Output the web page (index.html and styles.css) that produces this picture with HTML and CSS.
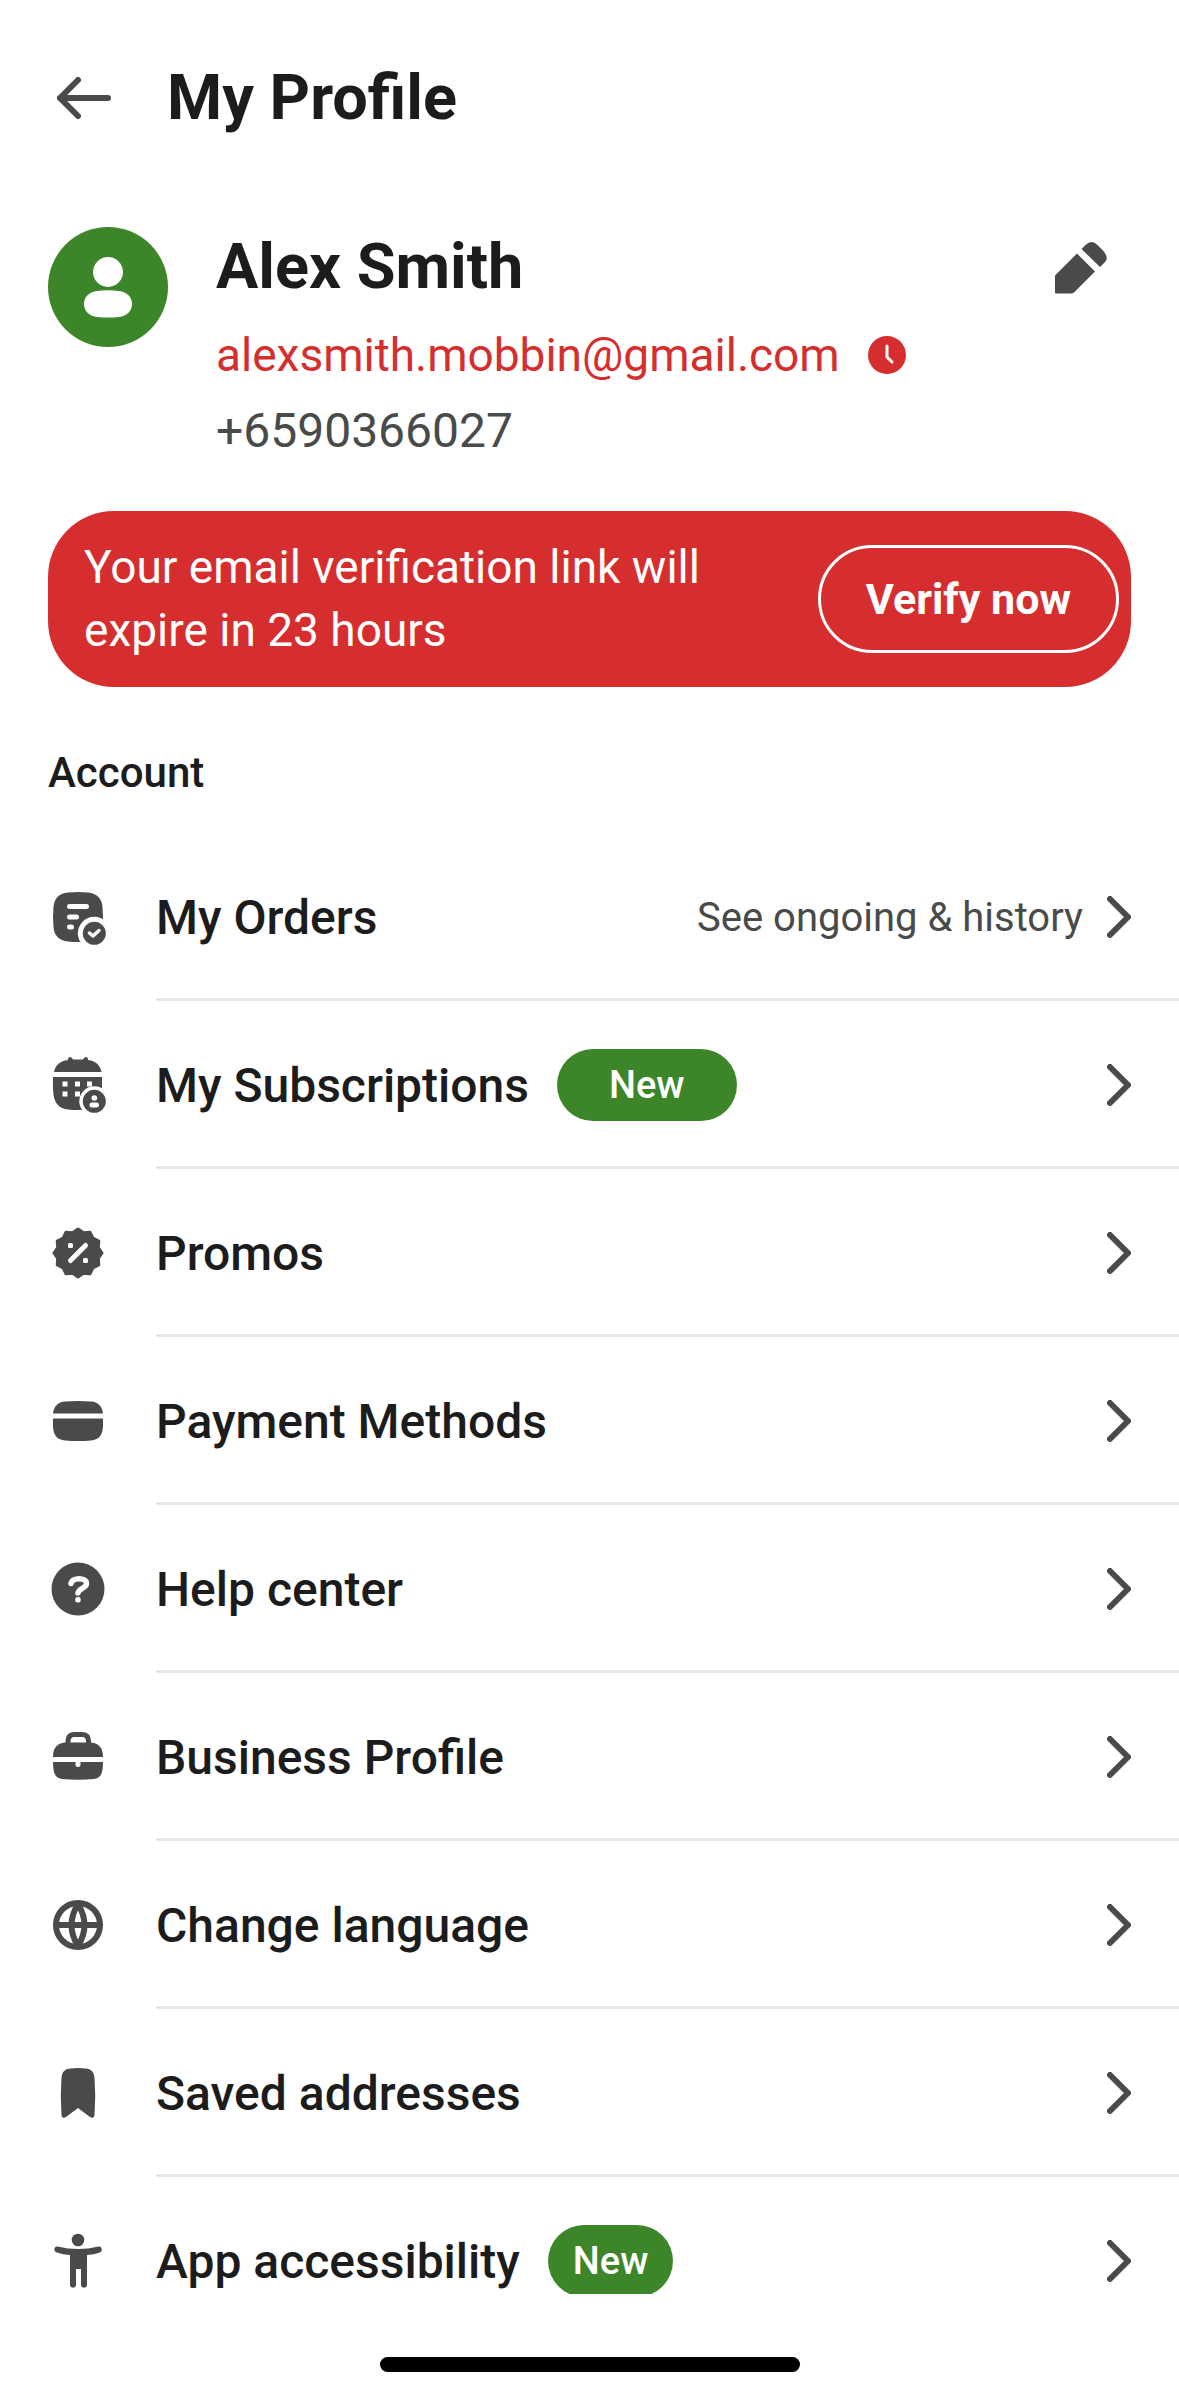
FILE: index.html
```html
<!DOCTYPE html>
<html lang="en">
<head>
    <meta charset="UTF-8">
    <meta name="viewport" content="width=device-width, initial-scale=1.0">
    <title>My Profile</title>
    <link rel="stylesheet" href="styles.css">
</head>
<body>
    <!-- Shared chevron for the menu rows -->
    <svg class="sprite" aria-hidden="true">
        <symbol id="chevron" viewBox="0 0 24 42">
            <path d="M3 3l18 18L3 39" fill="none" stroke="currentColor" stroke-width="6" stroke-linecap="round" stroke-linejoin="round"/>
        </symbol>
    </svg>

    <main class="screen">
        <header class="top-bar">
            <button class="icon-btn" type="button" aria-label="Back">
                <svg class="back-icon" viewBox="0 0 54 42"><path d="M21 3L3 21l18 18M3 21h48" fill="none" stroke="currentColor" stroke-width="6" stroke-linecap="round" stroke-linejoin="round"/></svg>
            </button>
            <h1>My Profile</h1>
        </header>

        <section class="profile">
            <svg class="avatar" viewBox="0 0 120 120" aria-hidden="true">
                <circle cx="60" cy="60" r="60" fill="#3c8629"/>
                <circle cx="60" cy="45" r="15" fill="#fff"/>
                <path d="M49 64q11-1.500 22 0c8 1 13 6 13 13s-5 12-13 13q-11 1-22 0c-8-1-13-6-13-13s5-12 13-13z" fill="#fff"/>
            </svg>
            <div class="info">
                <h2 class="name">Alex Smith</h2>
                <p class="email">alexsmith.mobbin@gmail.com
                    <svg class="clock" viewBox="0 0 38 38" aria-hidden="true"><circle cx="19" cy="19" r="19" fill="currentColor"/><path d="M19 10v11l5 5" fill="none" stroke="#fff" stroke-width="3" stroke-linecap="round" stroke-linejoin="round"/></svg>
                </p>
                <p class="phone">+6590366027</p>
            </div>
            <button class="icon-btn edit-btn" type="button" aria-label="Edit profile">
                <svg class="edit-icon" viewBox="0 0 52 52"><path d="M0 33.500L22 11.500 40 29.500 19 50.500Q18 51.500 16 51.500H1Q0 51.500 0 50.500zM26.500 7l4-4q6-6 12 0l5.500 5.500q7 8 1 12.500l-4 4z" fill="currentColor"/></svg>
            </button>
        </section>

        <section class="banner">
            <p>Your email verification link will expire in 23 hours</p>
            <button class="verify-btn" type="button">Verify now</button>
        </section>

        <h2 class="section-title">Account</h2>

        <ul class="menu">
            <li><a href="#orders">
                <svg class="icon" viewBox="0 0 72 72"><path d="M26 11.500q10-1 20 0c9 1 14 6 14.500 14.500q1 10 0 20c-1 9-6 14-14.500 14.500q-10 1-20 0c-9-1-14-6-14.500-14.500q-1-10 0-20c1-9 6-14 14.500-14.500z" fill="currentColor"/><path d="M27.500 25.500h17M27.500 36h7M27.500 46h2" stroke="#fff" stroke-width="5" stroke-linecap="round"/><circle cx="52.300" cy="52.300" r="16.500" fill="#fff"/><circle cx="52.300" cy="52.300" r="11.500" fill="currentColor"/><path d="M47.500 52l3.500 3 6-5.500" fill="none" stroke="#fff" stroke-width="3.500" stroke-linecap="round" stroke-linejoin="round"/></svg>
                <span class="row">
                    <span class="label">My Orders</span>
                    <span class="hint">See ongoing &amp; history</span>
                    <svg class="chevron"><use href="#chevron"/></svg>
                </span>
            </a></li>
            <li><a href="#subscriptions">
                <svg class="icon" viewBox="0 0 72 72"><path d="M12 23c1.500-7 6-11 14-12q0-3 2-3t3 2.500h10q1-2.500 3-2.500t2 3c8 1 12 5 13.500 12zM11 28h49v14q0 4-1 8c-1.500 7-6 10-14 10.500q-9 1-19 0c-9-1-13-6-14.500-14.500Q10.500 38 11 28z" fill="currentColor"/><path d="M20.500 32.500h5v5h-5zM33 32.500h5v5h-5zM45 32.500h5v5h-5zM20.500 42.500h5v5h-5zM33 42.500h5v5h-5z" fill="#fff"/><circle cx="52.300" cy="52.300" r="15" fill="#fff"/><circle cx="52.300" cy="52.300" r="11.500" fill="currentColor"/><circle cx="52.300" cy="49" r="2.800" fill="#fff"/><rect x="47.500" y="53.500" width="9.500" height="5" rx="2.500" fill="#fff"/></svg>
                <span class="row">
                    <span class="label">My Subscriptions</span>
                    <span class="badge badge-wide">New</span>
                    <svg class="chevron"><use href="#chevron"/></svg>
                </span>
            </a></li>
            <li><a href="#promos">
                <svg class="icon" viewBox="0 0 72 72"><path d="M60 36L56.300 41.400 56.800 48 50.900 50.900 48 56.800 41.400 56.300 36 60 30.600 56.300 24 56.800 21.100 50.900 15.200 48 15.700 41.400 12 36 15.700 30.600 15.200 24 21.100 21.100 24 15.200 30.600 15.700 36 12 41.400 15.700 48 15.200 50.900 21.100 56.800 24 56.300 30.600z" fill="currentColor" stroke="currentColor" stroke-width="3" stroke-linejoin="round"/><path d="M28.500 43.500l15-15" stroke="#fff" stroke-width="5" stroke-linecap="round"/><rect x="26" y="26" width="5" height="5" rx="1.500" fill="#fff"/><rect x="41" y="41" width="5" height="5" rx="1.500" fill="#fff"/></svg>
                <span class="row">
                    <span class="label">Promos</span>
                    <svg class="chevron"><use href="#chevron"/></svg>
                </span>
            </a></li>
            <li><a href="#payment">
                <svg class="icon" viewBox="0 0 72 72"><path d="M11 28.500c1-7.500 5-11.500 12-12q13-1 26 0c7 .5 11 4.500 12 12zM11 33.500h50v8c-.5 9-4.500 13.500-12 14q-13 1-26 0c-7.500-.5-11.500-5-12-14z" fill="currentColor"/></svg>
                <span class="row">
                    <span class="label">Payment Methods</span>
                    <svg class="chevron"><use href="#chevron"/></svg>
                </span>
            </a></li>
            <li><a href="#help">
                <svg class="icon" viewBox="0 0 72 72"><circle cx="36" cy="36" r="26.500" fill="currentColor"/><path d="M29 30.500c1-6.500 15.500-6.500 15.500 0 0 5-8 4.500-8.500 9.500" fill="none" stroke="#fff" stroke-width="5.500" stroke-linecap="round"/><rect x="33.200" y="44" width="5.500" height="5.500" rx="2.500" fill="#fff"/></svg>
                <span class="row">
                    <span class="label">Help center</span>
                    <svg class="chevron"><use href="#chevron"/></svg>
                </span>
            </a></li>
            <li><a href="#business">
                <svg class="icon" viewBox="0 0 72 72"><path d="M26 23v-3q0-6 6-6.500h8.500q6 .5 6 6.500v3" fill="none" stroke="currentColor" stroke-width="5"/><path d="M11 36q0-13.500 12-14.500h26q12 1 12 14.500zM11 41h22.500v2.500a2.500 2.500 0 0 0 5 0V41H61q0 6-1 10-1.500 6-8 7-16 1.500-32 0-6.500-1-8-7-1-4-1-10z" fill="currentColor"/></svg>
                <span class="row">
                    <span class="label">Business Profile</span>
                    <svg class="chevron"><use href="#chevron"/></svg>
                </span>
            </a></li>
            <li><a href="#language">
                <svg class="icon" viewBox="0 0 72 72"><g fill="none" stroke="currentColor" stroke-width="6" stroke-linejoin="round"><circle cx="36" cy="36" r="22"/><path d="M36 15q-13 21 0 42q13-21 0-42zM14 36h44"/></g></svg>
                <span class="row">
                    <span class="label">Change language</span>
                    <svg class="chevron"><use href="#chevron"/></svg>
                </span>
            </a></li>
            <li><a href="#addresses">
                <svg class="icon" viewBox="0 0 72 72"><path d="M19.500 21c.5-6 3-9 9-9.500q7.500-1 15 0c6 .5 8.500 3.500 9 9.500q1.500 18 0 37c-.5 3-2.500 3.500-4.500 2L36 51 24 60c-2 1.500-4 1-4.500-2q-1.500-19 0-37z" fill="currentColor"/></svg>
                <span class="row">
                    <span class="label">Saved addresses</span>
                    <svg class="chevron"><use href="#chevron"/></svg>
                </span>
            </a></li>
            <li><a href="#accessibility">
                <svg class="icon" viewBox="0 0 72 72"><circle cx="36" cy="15" r="6.300" fill="currentColor"/><path d="M15.500 21.500q20.500 5 41 0c3.500-.5 4.500 4.500 1.500 6q-6 2-13 2.500V60c0 3.500-6 3.500-6 0V44h-5v16c0 3.500-6 3.500-6 0V30q-7-.5-13-2.500c-4-1.500-3-6.500.500-6z" fill="currentColor"/></svg>
                <span class="row">
                    <span class="label">App accessibility</span>
                    <span class="badge">New</span>
                    <svg class="chevron"><use href="#chevron"/></svg>
                </span>
            </a></li>
        </ul>
    </main>

    <footer class="home-area"><div class="home-indicator"></div></footer>
</body>
</html>
```

FILE: styles.css
```css
* {
    box-sizing: border-box;
}

body {
    display: flex;
    flex-direction: column;
    height: 100vh;
    margin: 0;
    background-color: #fff;
    color: #1c1c1c;
    font-family: Roboto, "Liberation Sans", sans-serif;
}

h1, h2, p, ul {
    margin: 0;
    padding: 0;
}

.sprite {
    display: none;
}

.screen {
    flex: 1;
    min-height: 0;
    overflow: hidden auto;
    scrollbar-width: none;
}

.icon-btn {
    display: flex;
    padding: 0;
    border: none;
    background: none;
    color: #494a4a;
    cursor: pointer;
}

.top-bar {
    display: flex;
    align-items: center;
    gap: 56px;
    height: 196px;
    padding: 0 57px;
}

.back-icon {
    width: 54px;
    height: 42px;
}

h1, .name {
    font-size: 63px;
    font-weight: 700;
    line-height: 80px;
}

.profile {
    display: flex;
    align-items: flex-start;
    gap: 48px;
    padding: 31px 72px 42px 48px;
}

.avatar {
    flex: none;
    width: 120px;
    height: 120px;
}

.info {
    flex: 1;
}

.email, .phone {
    font-size: 46px;
    font-weight: 400;
    line-height: 76px;
}

.email {
    display: flex;
    align-items: center;
    gap: 28px;
    margin-top: 10px;
    color: #d62e2e;
}

.phone {
    color: #494a4a;
    font-size: 48px;
}

.clock {
    width: 38px;
    height: 38px;
}

.edit-btn {
    margin-top: 15px;
}

.edit-icon {
    width: 52px;
    height: 52px;
}

.banner {
    display: flex;
    align-items: center;
    justify-content: space-between;
    gap: 48px;
    margin: 0 48px;
    padding: 25px 12px 25px 36px;
    border-radius: 66px;
    background-color: #d62e2e;
    color: #fff;
}

.banner p {
    max-width: 660px;
    font-size: 46px;
    font-weight: 400;
    line-height: 63px;
}

.verify-btn {
    flex: none;
    height: 108px;
    padding: 0 45px;
    border: 3px solid #fff;
    border-radius: 54px;
    background: none;
    color: #fff;
    font-family: inherit;
    font-size: 43px;
    font-weight: 700;
    cursor: pointer;
}

.section-title {
    margin: 62px 48px 36px;
    font-size: 42px;
    font-weight: 500;
    line-height: 48px;
}

/* Menu rows: icon, then a row that carries the divider to the screen edge */
.menu {
    list-style: none;
}

.menu a {
    display: flex;
    align-items: center;
    gap: 42px;
    padding-left: 42px;
    color: inherit;
    text-decoration: none;
}

.icon {
    flex: none;
    width: 72px;
    height: 72px;
    color: #494a4a;
}

.row {
    display: flex;
    flex: 1;
    align-items: center;
    height: 168px;
    padding: 3px 48px 0 0;
    border-bottom: 3px solid #e7e7e7;
}

.label {
    font-size: 48px;
    font-weight: 500;
}

.hint {
    margin-left: auto;
    color: #494a4a;
    font-size: 40px;
    font-weight: 400;
}

.badge {
    margin-left: 28px;
    padding: 0 25px;
    border-radius: 36px;
    background-color: #3c8629;
    color: #fff;
    font-size: 38px;
    font-weight: 500;
    line-height: 72px;
}

.badge-wide {
    padding: 0 52px;
}

.chevron {
    width: 24px;
    height: 42px;
    margin-left: auto;
    color: #494a4a;
}

.hint + .chevron {
    margin-left: 24px;
}

.home-area {
    display: flex;
    align-items: flex-end;
    justify-content: center;
    height: 102px;
    padding-bottom: 24px;
}

.home-indicator {
    width: 420px;
    height: 15px;
    border-radius: 8px;
    background-color: #000;
}
```
